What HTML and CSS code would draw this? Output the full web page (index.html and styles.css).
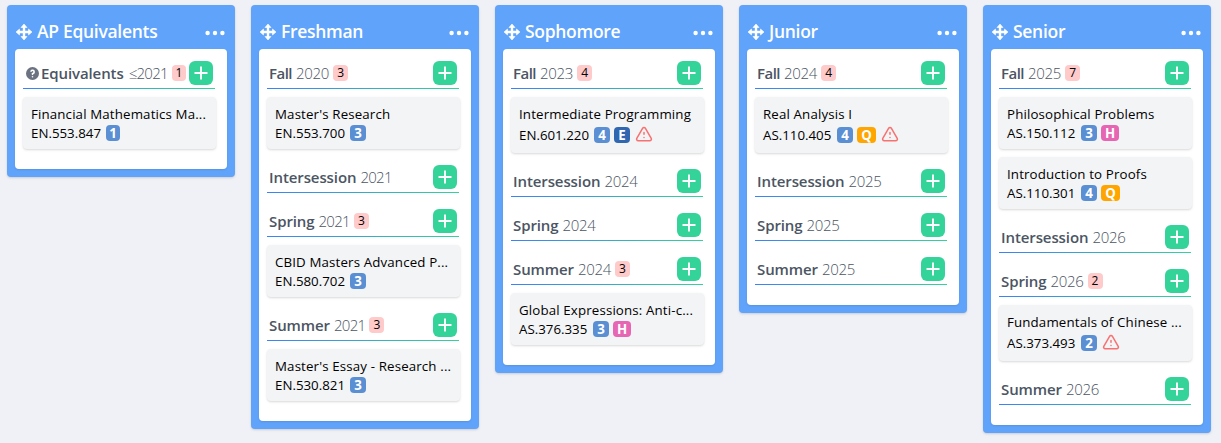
FILE: index.html
```html
<!DOCTYPE html>
<html lang="en">
<head>
<meta charset="utf-8">
<title>Degree plan</title>
<link rel="stylesheet" href="styles.css">
</head>
<body>
<svg class="defs" width="0" height="0">
  <symbol id="move" viewBox="0 0 16 16"><path d="M8 0 11 3.5H5zM8 16 5 12.5h6zM0 8 3.5 5v6zM16 8l-3.500 3V5z" fill="currentColor" stroke="currentColor" stroke-width=".6" stroke-linejoin="round"/><path d="M8 3v10M3 8h10" fill="none" stroke="currentColor" stroke-width="2.400"/></symbol>
  <symbol id="dots" viewBox="0 0 20 6"><circle cx="2.6" cy="3" r="2.2" fill="currentColor"/><circle cx="10" cy="3" r="2.2" fill="currentColor"/><circle cx="17.4" cy="3" r="2.2" fill="currentColor"/></symbol>
  <symbol id="plus" viewBox="0 0 24 24"><path d="M12 5.500v13M5.500 12h13" fill="none" stroke="currentColor" stroke-width="1.900"/></symbol>
  <symbol id="warn" viewBox="0 0 24 24"><path d="M12 9v2m0 4h.01M5.07 19h13.86c1.54 0 2.5-1.67 1.73-3L13.73 4c-.77-1.33-2.69-1.33-3.46 0L3.34 16c-.77 1.33.19 3 1.73 3z" fill="none" stroke="currentColor" stroke-width="1.800" stroke-linecap="round" stroke-linejoin="round"/></symbol>
  <symbol id="help" viewBox="2 2 16 16"><path fill="currentColor" fill-rule="evenodd" d="M18 10a8 8 0 11-16 0 8 8 0 0116 0zm-8-3a1 1 0 00-.867.5 1 1 0 11-1.731-1A3 3 0 0113 8a3.001 3.001 0 01-2 2.830V11a1 1 0 11-2 0v-1a1 1 0 011-1 1 1 0 100-2zm0 8a1 1 0 100-2 1 1 0 000 2z"/></symbol>
</svg>
<main class="plan">
  <section class="year">
    <header class="year-head"><svg class="move"><use href="#move"/></svg><h2>AP Equivalents</h2><svg class="dots"><use href="#dots"/></svg></header>
    <div class="terms">
      <div class="term">
        <div class="term-head equiv"><svg class="help"><use href="#help"/></svg><b>Equivalents</b><i class="narrow">≤2021</i><span class="total">1</span><button class="add"><svg><use href="#plus"/></svg></button></div>
        <div class="course"><p class="title">Financial Mathematics Ma...</p><div class="meta"><span>EN.553.847</span><em class="tag one">1</em></div></div>
      </div>
    </div>
  </section>
  <section class="year">
    <header class="year-head"><svg class="move"><use href="#move"/></svg><h2>Freshman</h2><svg class="dots"><use href="#dots"/></svg></header>
    <div class="terms">
      <div class="term">
        <div class="term-head"><b class="fall">Fall</b><i>2020</i><span class="total">3</span><button class="add"><svg><use href="#plus"/></svg></button></div>
        <div class="course"><p class="title">Master's Research</p><div class="meta"><span>EN.553.700</span><em class="tag">3</em></div></div>
      </div>
      <div class="term">
        <div class="term-head"><b>Intersession</b><i class="narrow">2021</i><button class="add"><svg><use href="#plus"/></svg></button></div>
      </div>
      <div class="term">
        <div class="term-head"><b>Spring</b><i class="narrow">2021</i><span class="total">3</span><button class="add"><svg><use href="#plus"/></svg></button></div>
        <div class="course"><p class="title">CBID Masters Advanced P...</p><div class="meta"><span>EN.580.702</span><em class="tag">3</em></div></div>
      </div>
      <div class="term">
        <div class="term-head"><b>Summer</b><i class="narrow">2021</i><span class="total">3</span><button class="add"><svg><use href="#plus"/></svg></button></div>
        <div class="course"><p class="title">Master's Essay - Research ...</p><div class="meta"><span>EN.530.821</span><em class="tag">3</em></div></div>
      </div>
    </div>
  </section>
  <section class="year">
    <header class="year-head"><svg class="move"><use href="#move"/></svg><h2>Sophomore</h2><svg class="dots"><use href="#dots"/></svg></header>
    <div class="terms">
      <div class="term">
        <div class="term-head"><b class="fall">Fall</b><i>2023</i><span class="total">4</span><button class="add"><svg><use href="#plus"/></svg></button></div>
        <div class="course flagged"><p class="title">Intermediate Programming</p><div class="meta"><span>EN.601.220</span><em class="tag">4</em><em class="tag eng">E</em><svg class="warn"><use href="#warn"/></svg></div></div>
      </div>
      <div class="term">
        <div class="term-head"><b>Intersession</b><i>2024</i><button class="add"><svg><use href="#plus"/></svg></button></div>
      </div>
      <div class="term">
        <div class="term-head"><b>Spring</b><i>2024</i><button class="add"><svg><use href="#plus"/></svg></button></div>
      </div>
      <div class="term">
        <div class="term-head"><b>Summer</b><i>2024</i><span class="total">3</span><button class="add"><svg><use href="#plus"/></svg></button></div>
        <div class="course"><p class="title">Global Expressions: Anti-c...</p><div class="meta"><span class="as">AS.376.335</span><em class="tag">3</em><em class="tag hum">H</em></div></div>
      </div>
    </div>
  </section>
  <section class="year">
    <header class="year-head"><svg class="move"><use href="#move"/></svg><h2>Junior</h2><svg class="dots"><use href="#dots"/></svg></header>
    <div class="terms">
      <div class="term">
        <div class="term-head"><b class="fall">Fall</b><i>2024</i><span class="total">4</span><button class="add"><svg><use href="#plus"/></svg></button></div>
        <div class="course flagged"><p class="title">Real Analysis I</p><div class="meta"><span class="as">AS.110.405</span><em class="tag">4</em><em class="tag quant">Q</em><svg class="warn"><use href="#warn"/></svg></div></div>
      </div>
      <div class="term">
        <div class="term-head"><b>Intersession</b><i>2025</i><button class="add"><svg><use href="#plus"/></svg></button></div>
      </div>
      <div class="term">
        <div class="term-head"><b>Spring</b><i>2025</i><button class="add"><svg><use href="#plus"/></svg></button></div>
      </div>
      <div class="term">
        <div class="term-head"><b>Summer</b><i>2025</i><button class="add"><svg><use href="#plus"/></svg></button></div>
      </div>
    </div>
  </section>
  <section class="year">
    <header class="year-head"><svg class="move"><use href="#move"/></svg><h2>Senior</h2><svg class="dots"><use href="#dots"/></svg></header>
    <div class="terms">
      <div class="term">
        <div class="term-head"><b class="fall">Fall</b><i>2025</i><span class="total">7</span><button class="add"><svg><use href="#plus"/></svg></button></div>
        <div class="course"><p class="title">Philosophical Problems</p><div class="meta"><span class="as">AS.150.112</span><em class="tag">3</em><em class="tag hum">H</em></div></div>
        <div class="course"><p class="title">Introduction to Proofs</p><div class="meta"><span class="as">AS.110.301</span><em class="tag">4</em><em class="tag quant">Q</em></div></div>
      </div>
      <div class="term">
        <div class="term-head"><b>Intersession</b><i>2026</i><button class="add"><svg><use href="#plus"/></svg></button></div>
      </div>
      <div class="term">
        <div class="term-head"><b>Spring</b><i>2026</i><span class="total">2</span><button class="add"><svg><use href="#plus"/></svg></button></div>
        <div class="course flagged"><p class="title">Fundamentals of Chinese ...</p><div class="meta"><span class="as">AS.373.493</span><em class="tag">2</em><svg class="warn"><use href="#warn"/></svg></div></div>
      </div>
      <div class="term">
        <div class="term-head"><b>Summer</b><i>2026</i><button class="add"><svg><use href="#plus"/></svg></button></div>
      </div>
    </div>
  </section>
</main>
</body>
</html>
```
FILE: styles.css
```css
* { box-sizing: border-box; margin: 0; padding: 0; }
body {
  height: 443px;
  overflow: hidden;
  background: #f0f1f6;
  font-family: "Open Sans", "Noto Sans", sans-serif;
  color: #000;
}
.defs { display: block; height: 0; }
.plan { display: flex; align-items: flex-start; gap: 16px; padding: 5px 7px; }
.year {
  flex: none;
  width: 228px;
  padding: 8px;
  border-radius: 4px;
  background: #60a3fb;
  box-shadow: 0 1px 3px rgba(0, 0, 0, .1), 0 1px 2px rgba(0, 0, 0, .06);
}
.year-head { display: flex; align-items: center; height: 36px; padding: 0 0 0 1px; color: #fff; }
.year-head h2 { margin-left: 5px; font-size: 17.5px; font-weight: 600; line-height: 28px; letter-spacing: -.3px; }
.move { width: 16px; height: 16px; margin-top: 2px; }
.dots { width: 20px; height: 6px; margin: 3px 2px 0 auto; }
.terms {
  display: flex;
  flex-direction: column;
  gap: 16px;
  padding: 12px 12px 20px 8px;
  border-radius: 4px;
  background: #fff;
  box-shadow: 0 1px 2px rgba(0, 0, 0, .1);
}
.term { display: flex; flex-direction: column; gap: 8px; }
.term-head {
  display: flex;
  align-items: center;
  height: 28px;
  padding: 0 2px 4px;
  background: linear-gradient(to right, #3b82f6, #34d399) bottom / 100% 1px no-repeat;
  color: #4b5563;
  font-size: 15px;
  line-height: 24px;
}
.term-head b { font-weight: 600; letter-spacing: -.1px; }
.term-head .fall { letter-spacing: -.5px; }
.term-head i { margin-left: 4px; font-style: normal; font-weight: 300; letter-spacing: -.3px; }
.term-head .narrow { letter-spacing: -.7px; }
.total {
  width: 15px;
  height: 16px;
  margin-left: 4px;
  border-radius: 4px;
  background: #fecaca;
  color: #000;
  font-size: 12px;
  line-height: 16px;
  text-align: center;
}
.add {
  width: 24px;
  height: 24px;
  margin-left: auto;
  border: 0;
  border-radius: 6px;
  background: #34d399;
  color: #fff;
}
.add svg { display: block; width: 24px; height: 24px; }
.help { width: 13px; height: 13px; margin: 0 2px 0 1px; color: #6b7280; }
.equiv i { margin-left: 5px; }
.equiv .total { width: 14px; }
.course {
  width: 193px;
  height: 52px;
  padding: 7px 8px;
  border-radius: 4px;
  background: #f3f4f6;
  box-shadow: 0 1px 3px rgba(0, 0, 0, .1), 0 1px 2px rgba(0, 0, 0, .06);
}
.flagged { height: 56px; }
.title { height: 20px; font-size: 13.3px; line-height: 20px; letter-spacing: .14px; white-space: nowrap; }
.meta { display: flex; align-items: center; height: 18px; font-size: 13.3px; line-height: 18px; }
.flagged .meta { height: 22px; }
.tag {
  width: 16px;
  height: 16px;
  margin-left: 4px;
  border-radius: 4px;
  background: #5b8fd4;
  color: #fff;
  font-size: 13.3px;
  font-style: normal;
  font-weight: 700;
  line-height: 17px;
  text-align: center;
}
.meta span { flex: none; width: 71px; }
.meta .as { width: 70px; }
.one { width: 14px; }
.eng { background: #3067b0; }
.hum { width: 18px; background: #e766b3; }
.quant { width: 19px; background: #ffa500; }
.warn { width: 20px; height: 20px; margin-left: 4px; color: #f87171; }
```
